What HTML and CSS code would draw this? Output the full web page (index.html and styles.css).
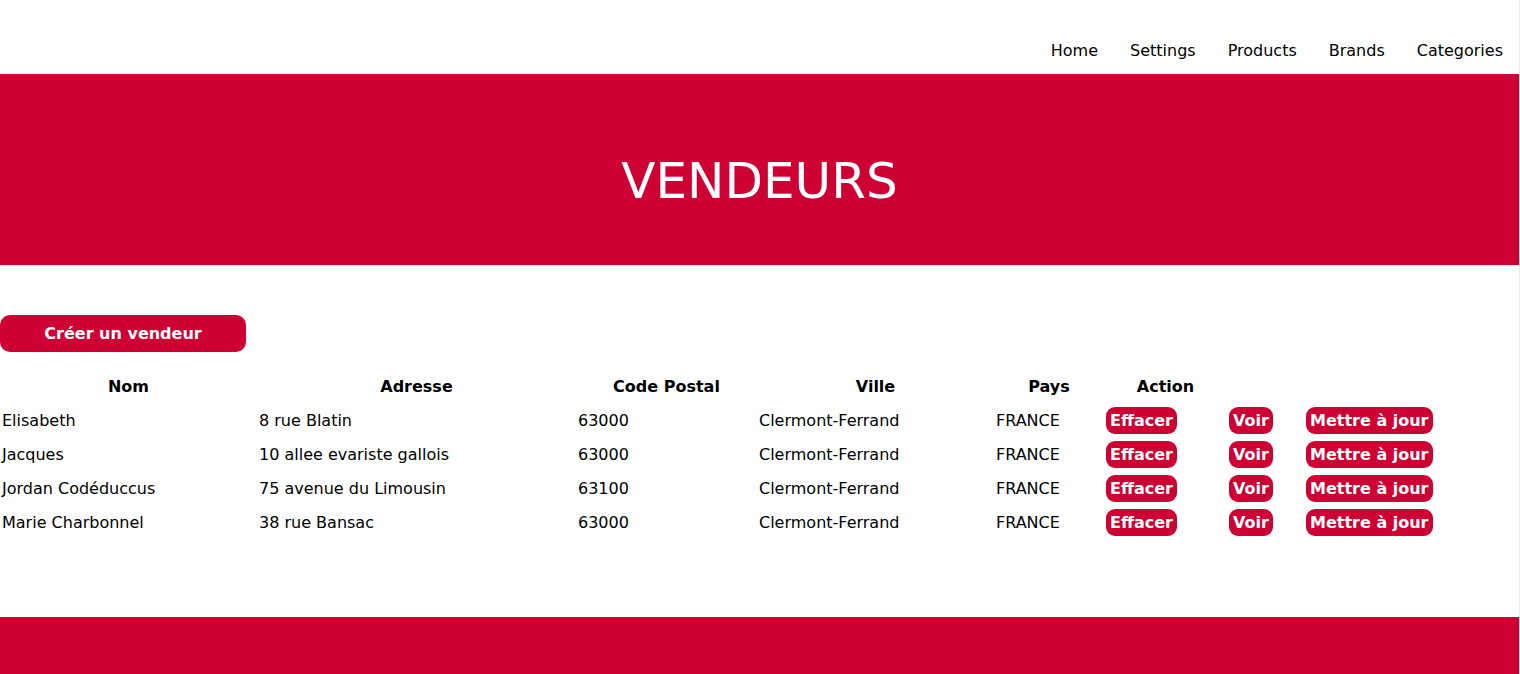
FILE: index.html
```html
<!DOCTYPE html>
<html lang="fr">
<head>
<meta charset="utf-8">
<title>Vendeurs</title>
<link rel="stylesheet" href="styles.css">
</head>
<body>
<div class="page">
  <header class="topbar">
    <nav class="nav">
      <a href="#">Home</a>
      <a href="#">Settings</a>
      <a href="#">Products</a>
      <a href="#">Brands</a>
      <a href="#">Categories</a>
    </nav>
  </header>
  <section class="banner">
    <h1>VENDEURS</h1>
  </section>
  <main class="content">
    <a href="#" class="create-btn">Créer un vendeur</a>
    <table class="sellers">
      <colgroup>
        <col class="c-nom"><col class="c-adr"><col class="c-cp"><col class="c-ville"><col class="c-pays"><col class="c-act"><col class="c-voir"><col class="c-maj">
      </colgroup>
      <thead>
        <tr><th>Nom</th><th>Adresse</th><th>Code Postal</th><th>Ville</th><th>Pays</th><th>Action</th><th></th><th></th></tr>
      </thead>
      <tbody>
        <tr><td>Elisabeth</td><td>8 rue Blatin</td><td>63000</td><td>Clermont-Ferrand</td><td>FRANCE</td><td class="act"><a href="#" class="pill">Effacer</a></td><td class="act"><a href="#" class="pill">Voir</a></td><td class="act"><a href="#" class="pill">Mettre à jour</a></td></tr>
        <tr><td>Jacques</td><td>10 allee evariste gallois</td><td>63000</td><td>Clermont-Ferrand</td><td>FRANCE</td><td class="act"><a href="#" class="pill">Effacer</a></td><td class="act"><a href="#" class="pill">Voir</a></td><td class="act"><a href="#" class="pill">Mettre à jour</a></td></tr>
        <tr><td>Jordan Codéduccus</td><td>75 avenue du Limousin</td><td>63100</td><td>Clermont-Ferrand</td><td>FRANCE</td><td class="act"><a href="#" class="pill">Effacer</a></td><td class="act"><a href="#" class="pill">Voir</a></td><td class="act"><a href="#" class="pill">Mettre à jour</a></td></tr>
        <tr><td>Marie Charbonnel</td><td>38 rue Bansac</td><td>63000</td><td>Clermont-Ferrand</td><td>FRANCE</td><td class="act"><a href="#" class="pill">Effacer</a></td><td class="act"><a href="#" class="pill">Voir</a></td><td class="act"><a href="#" class="pill">Mettre à jour</a></td></tr>
      </tbody>
    </table>
  </main>
  <footer class="footer"></footer>
</div>
</body>
</html>
```
FILE: styles.css
```css
html, body {
  margin: 0;
  padding: 0;
  background: #ffffff;
}
body {
  font-family: "DejaVu Sans", "Liberation Sans", sans-serif;
  font-size: 16px;
  color: #000000;
  overflow: hidden;
}
.page {
  width: 1519px;
  border-right: 1px solid #ececec;
}
.topbar {
  height: 74px;
  box-sizing: border-box;
  padding-top: 41px;
}
.nav {
  display: flex;
  justify-content: flex-end;
  gap: 32px;
  padding-right: 16px;
}
.nav a {
  color: #000000;
  text-decoration: none;
  line-height: 20px;
}
.banner {
  height: 191px;
  box-sizing: border-box;
  padding-top: 78px;
  background: #ce0033;
  text-align: center;
}
.banner h1 {
  margin: 0;
  font-size: 50px;
  font-weight: normal;
  line-height: 58px;
  color: #ffffff;
}
.content {
  padding-top: 50px;
  padding-bottom: 78px;
}
.create-btn {
  display: block;
  width: 246px;
  height: 37px;
  line-height: 37px;
  border-radius: 10px;
  background: #ce0033;
  color: #ffffff;
  font-weight: bold;
  text-align: center;
  text-decoration: none;
}
.sellers {
  margin-top: 17px;
  border-collapse: collapse;
  table-layout: fixed;
  width: 1435px;
}
.c-nom { width: 257px; }
.c-adr { width: 319px; }
.c-cp { width: 181px; }
.c-ville { width: 237px; }
.c-pays { width: 110px; }
.c-act { width: 123px; }
.c-voir { width: 77px; }
.c-maj { width: 131px; }
.sellers th,
.sellers td {
  padding: 0;
  height: 34px;
  vertical-align: middle;
  white-space: nowrap;
}
.sellers th {
  font-weight: bold;
  text-align: center;
}
.sellers td {
  text-align: left;
  padding-left: 2px;
}
.sellers td.act {
  padding-left: 0;
}
.pill {
  display: inline-block;
  margin-left: 2px;
  padding: 0 4px;
  height: 27px;
  line-height: 27px;
  border-radius: 9px;
  background: #ce0033;
  color: #ffffff;
  font-weight: bold;
  text-decoration: none;
  vertical-align: middle;
}
.footer {
  height: 60px;
  background: #ce0033;
}
```
